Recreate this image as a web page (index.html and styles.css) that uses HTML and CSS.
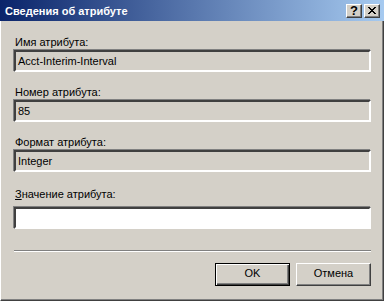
FILE: index.html
```html
<!DOCTYPE html>
<html lang="ru">
<head>
    <meta charset="UTF-8">
    <title>Сведения об атрибуте</title>
    <link rel="stylesheet" href="styles.css">
</head>
<body>
    <div class="window">
        <div class="titlebar">
            <span class="title">Сведения об атрибуте</span>
            <div class="caption-buttons">
                <div class="cap-btn">?</div>
                <div class="cap-btn">
                    <svg width="8" height="7" viewBox="0 0 8 7">
                        <path d="M0 0h2v1h1v1h2v-1h1v-1h2v1h-1v1h-1v1h-1v1h1v1h1v1h1v1h-2v-1h-1v-1h-2v1h-1v1h-2v-1h1v-1h1v-1h1v-1h-1v-1h-1v-1h-1z" fill="#000"/>
                    </svg>
                </div>
            </div>
        </div>

        <div class="client">
            <div class="field">
                <div class="label">Имя атрибута:</div>
                <div class="edit readonly">Acct-Interim-Interval</div>
            </div>
            <div class="field">
                <div class="label">Номер атрибута:</div>
                <div class="edit readonly">85</div>
            </div>
            <div class="field">
                <div class="label">Формат атрибута:</div>
                <div class="edit readonly">Integer</div>
            </div>
            <div class="field value-field">
                <div class="label"><u>З</u>начение атрибута:</div>
                <div class="edit"></div>
            </div>

            <div class="separator"></div>

            <div class="buttons">
                <div class="btn default">OK</div>
                <div class="btn">Отмена</div>
            </div>
        </div>
    </div>
</body>
</html>
```

FILE: styles.css
```css
* {
    margin: 0;
    padding: 0;
    box-sizing: border-box;
}

body {
    font-family: "Liberation Sans", Arial, sans-serif;
    font-size: 11px;
    color: #000;
    background: #d4d0c8;
    width: 384px;
    height: 301px;
    overflow: hidden;
}

.window {
    width: 384px;
    height: 301px;
    display: flex;
    flex-direction: column;
}

.titlebar {
    height: 21px;
    background: linear-gradient(to right, #0a246a 0%, #a6caf0 100%);
    display: flex;
    align-items: center;
    justify-content: space-between;
    padding: 0 4px 0 5px;
}

.title {
    color: #fff;
    font-weight: bold;
    font-size: 11px;
}

.caption-buttons {
    display: flex;
    gap: 2px;
    margin-top: 1px;
}

.cap-btn {
    width: 16px;
    height: 14px;
    background: #d4d0c8;
    border-top: 1px solid #fff;
    border-left: 1px solid #fff;
    border-right: 1px solid #404040;
    border-bottom: 1px solid #404040;
    box-shadow: inset -1px -1px 0 #808080;
    display: flex;
    align-items: center;
    justify-content: center;
    font-weight: bold;
    font-size: 13px;
    line-height: 12px;
    padding-bottom: 1px;
}

.client {
    flex: 1;
    border-left: 1px solid #fff;
    border-right: 1px solid #404040;
    border-bottom: 1px solid #404040;
    box-shadow: inset -1px -1px 0 #808080;
    padding: 15px 12px 0 13px;
}

.field {
    margin-bottom: 14px;
}

.label {
    height: 13px;
    line-height: 13px;
    margin-bottom: 1px;
    padding-left: 1px;
}

.value-field {
    margin-top: 16px;
}

.value-field .label {
    margin-bottom: 6px;
}

.edit {
    height: 22px;
    line-height: 18px;
    padding-left: 2px;
    background: #fff;
    border-top: 2px solid #404040;
    border-left: 2px solid #404040;
    border-bottom: 2px solid #fff;
    border-right: 2px solid #fff;
    box-shadow: -1px -1px 0 #808080, 1px 1px 0 #d4d0c8;
    white-space: nowrap;
}

.edit.readonly {
    background: #d4d0c8;
}

.separator {
    margin-top: 21px;
    height: 2px;
    border-top: 1px solid #808080;
    border-bottom: 1px solid #fff;
}

.buttons {
    display: flex;
    justify-content: flex-end;
    gap: 6px;
    margin-top: 11px;
}

.btn {
    width: 75px;
    height: 23px;
    line-height: 19px;
    text-align: center;
    background: #d4d0c8;
    border-top: 1px solid #fff;
    border-left: 1px solid #fff;
    border-right: 1px solid #404040;
    border-bottom: 1px solid #404040;
    box-shadow: inset -1px -1px 0 #808080;
}

.btn.default {
    border: 1px solid #000;
    box-shadow: inset 1px 1px 0 #fff, inset -1px -1px 0 #404040, inset -2px -2px 0 #808080;
}
```
